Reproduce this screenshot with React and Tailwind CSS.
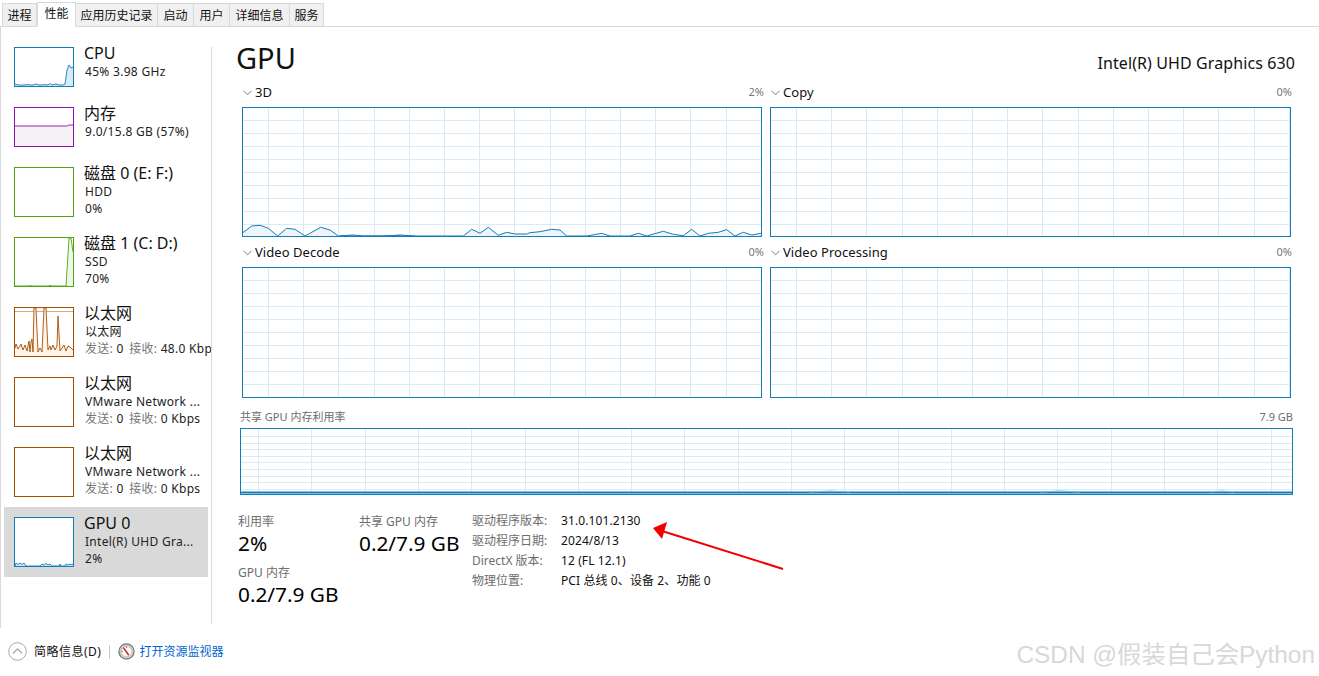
import React from "react";

const FONT = '"Noto Sans", "Noto Sans CJK SC", sans-serif';

const tabs = [
  { name: "进程", w: "w-[35px]" },
  { name: "性能", w: "w-[39px]", active: true },
  { name: "应用历史记录", w: "w-[83px]" },
  { name: "启动", w: "w-[37px]" },
  { name: "用户", w: "w-[37px]" },
  { name: "详细信息", w: "w-[61px]" },
  { name: "服务", w: "w-[35px]" },
];

/* task manager chart colours */
const BLUE = "#117dbb";
const PURPLE = "#8b12ae";
const GREEN = "#4da60c";
const BROWN = "#a74f01";

const toPath = (pts) => pts.map((p, i) => `${i ? "L" : "M"}${p[0]} ${p[1]}`).join(" ");

const Thumb = ({ color, h, line, fill, extra }) => (
  <div className={`w-[60px] shrink-0 border bg-white ${h}`} style={{ borderColor: color }}>
    <svg className="block w-full h-full" viewBox={`0 0 58 ${h === "h-[40px]" ? 38 : 48}`} preserveAspectRatio="none">
      {extra}
      {line && <path d={`${toPath(line)} L58 60 L0 60 Z`} fill={fill} stroke="none" />}
      {line && <path d={toPath(line)} fill="none" stroke={color} strokeWidth="0.9" />}
    </svg>
  </div>
);

const cpuLine = [[0,36],[3,37],[6,37],[9,37],[12,36.5],[15,37],[18,37],[21,36],[24,37],[27,37],[30,36.5],[33,37],[35,35.5],[37,37],[41,36],[44,37],[48,37],[50,36],[52,22],[54,17],[56,20],[58,19]];
const memLine = [[0,18],[52,18],[54,17],[58,17]];
const disk1Line = [[0,48],[15,48],[15.5,47],[16,48],[34,48],[35,47],[36,48],[51,48],[54,0],[56,0],[58,14]];
const ethLine = [[0,40],[1,36],[3,41],[5,38],[6,36],[8,42],[10,37],[12,43],[14,33],[15,44],[16,34],[17,31],[18,44],[19,0],[21,0],[23,44],[25,40],[27,44],[29,0],[31,0],[33,42],[35,38],[36,42],[38,37],[40,42],[42,38],[43,8],[45,43],[47,40],[49,37],[51,43],[53,38],[55,39],[58,42]];
const gpuLine = [[0,48],[1,45],[3,46.5],[5,45],[7,46.5],[9,45],[11,48],[25,48],[27,46],[29,47],[31,45.5],[33,47],[35,46],[37,48],[44,48],[45,46],[46,48],[50,48],[51,46],[53,47],[55,46],[56,47],[58,46]];

const sideItems = [
  { title: "CPU", sub: ["45% 3.98 GHz"], color: BLUE, h: "h-[40px]", line: cpuLine, fill: "#d8e9f3" },
  { title: "内存", sub: ["9.0/15.8 GB (57%)"], color: PURPLE, h: "h-[40px]", line: memLine, fill: "#f4f2f4" },
  { title: "磁盘 0 (E: F:)", sub: ["HDD", "0%"], color: GREEN, h: "h-[50px]" },
  { title: "磁盘 1 (C: D:)", sub: ["SSD", "70%"], color: GREEN, h: "h-[50px]", line: disk1Line, fill: "#eff6e9" },
  {
    title: "以太网",
    sub: ["以太网"],
    net: "48.0 Kbps",
    color: BROWN,
    h: "h-[50px]",
    line: ethLine,
    fill: "#fcf3e9",
    extra: <path d="M0 3.5 H58" stroke="#d2ad8c" strokeWidth="1" />,
  },
  { title: "以太网", sub: ["VMware Network ..."], net: "0 Kbps", color: BROWN, h: "h-[50px]" },
  { title: "以太网", sub: ["VMware Network ..."], net: "0 Kbps", color: BROWN, h: "h-[50px]" },
  { title: "GPU 0", sub: ["Intel(R) UHD Gra...", "2%"], color: BLUE, h: "h-[50px]", line: gpuLine, fill: "#d8e9f3", selected: true },
];

const SideItem = ({ item }) => (
  <div className={`ml-[4px] w-[204px] flex pl-[10px] pt-[10px] pb-[10px] whitespace-nowrap ${item.selected ? "bg-[#d9d9d9]" : ""}`}>
    <Thumb color={item.color} h={item.h} line={item.line} fill={item.fill} extra={item.extra} />
    <div className="ml-[10px] -mt-[4px]">
      <div className="h-[20px] text-[16px] leading-[20px] text-[#111]">{item.title}</div>
      {item.sub.map((s, i) => (
        <div key={i} className="h-[17px] pl-px text-[12px] leading-[17px] tracking-[0.3px] text-[#222]">{s}</div>
      ))}
      {item.net && (
        <div className="h-[17px] pl-px text-[12px] leading-[17px] tracking-[0.3px] text-[#222]">
          <span className="text-[#777]">发送:</span> 0 <span className="text-[#777] ml-[2px]">接收:</span> {item.net}
        </div>
      )}
    </div>
  </div>
);

const points3d = "242,233.3 251.7,226 260,225.3 268.3,228.3 277.7,236 286.7,228.3 295,229.3 305,236 320.7,227.3 330,230 338.3,236 353.3,235 363.3,236 386.7,236 400,235 415,236 463.3,236 471.7,229.3 480,233.3 488.3,227.3 498.3,235.3 506.7,232.3 515,234 526.7,234 530,232.7 540,231.7 551.7,229.3 560,230 566.7,236 586.7,236 601.7,233.3 610,236 630,236 638.3,233.3 646.7,236 663.3,231.3 673.3,234.3 683.3,235.7 691.7,229.3 700,236 708.3,233.3 718.3,232.3 726.7,229.7 735,236 743.3,232.3 751.7,235 761,233.3";

/* grid of a big chart: x and y are the screen lines */
const Graph = ({ x0, y0, w, h, firstX, stepX, firstY, stepY, rows, children }) => {
  const vs = [];
  for (let x = firstX; x < x0 + w - 1; x += stepX) vs.push(x);
  const hs = [];
  for (let i = 0; i < rows; i++) hs.push(firstY + i * stepY);
  return (
    <div className="border border-[#117dbb] bg-white" style={{ width: w, height: h }}>
      <svg className="block" width={w - 2} height={h - 2} viewBox={`${x0 + 1} ${y0 + 1} ${w - 2} ${h - 2}`}>
        {hs.map((y) => (
          <line key={y} x1={x0} x2={x0 + w} y1={Math.round(y) + 0.5} y2={Math.round(y) + 0.5} stroke="#d9eaf5" />
        ))}
        {vs.map((x) => (
          <line key={x} x1={Math.round(x) + 0.5} x2={Math.round(x) + 0.5} y1={y0} y2={y0 + h} stroke="#d9eaf5" />
        ))}
        {children}
      </svg>
    </div>
  );
};

const Chevron = () => (
  <svg width="9" height="6" viewBox="0 0 9 6" className="shrink-0">
    <path d="M0.5 0.8 L4.5 4.8 L8.5 0.8" fill="none" stroke="#7d7d7d" strokeWidth="1" />
  </svg>
);

const EngineCell = ({ name, pct, x0, y0, h, children }) => (
  <div className="w-[521px]">
    <div className="h-[30px] pt-[2px] flex items-center">
      <div className="ml-[1px] mr-[3px] w-[9px] flex"><Chevron /></div>
      <span className="text-[13px] tracking-[0.05px] text-[#111]">{name}</span>
      <span className="ml-auto -mr-[1px] -mt-[2px] text-[11px] text-[#777]">{pct}</span>
    </div>
    <Graph x0={x0} y0={y0} w={x0 === 242 ? 520 : 521} h={h} firstX={x0 === 242 ? 268 : 796} stepX={35.2} firstY={y0 + 13} stepY={13} rows={9}>
      {children}
    </Graph>
  </div>
);

const DriverRow = ({ label, value }) => (
  <div className="h-[20px] flex items-center whitespace-nowrap text-[12px]">
    <span className="w-[89px] text-[#6d6d6d]">{label}</span>
    <span className="tracking-[0.1px] text-[#111]">{value}</span>
  </div>
);

const Stat = ({ label, value, className = "" }) => (
  <div className={`whitespace-nowrap ${className}`}>
    <div className="h-[16px] text-[12px] leading-[18px] text-[#6d6d6d]">{label}</div>
    <div className="h-[30px] text-[20.8px] leading-[28px] text-black">{value}</div>
  </div>
);

const MonitorIcon = () => (
  <svg width="17" height="17" viewBox="0 0 17 17" className="shrink-0">
    <circle cx="8.5" cy="8.5" r="7.6" fill="#d8d6d0" stroke="#77756f" strokeWidth="1.2" />
    <circle cx="8.5" cy="8.5" r="5.4" fill="#fbfbf8" stroke="#a8a6a0" strokeWidth="0.7" />
    <path d="M5.4 4.6 L10.8 12.2" stroke="#c8242c" strokeWidth="1.5" />
    <path d="M3.5 8.5 H5 M8.5 3.5 V5" stroke="#555" strokeWidth="0.7" />
  </svg>
);

export default function App() {
  return (
    <div className="relative w-[1319px] h-[676px] overflow-hidden bg-white flex flex-col" style={{ fontFamily: FONT }}>
      {/* tabs */}
      <div className="h-[27px] flex items-end pl-[2px] border-b border-[#d9d9d9]">
        {tabs.map((t) => (
          <div
            key={t.name}
            className={`${t.w} flex items-center justify-center text-[12px] text-[#111] border border-[#d9d9d9] whitespace-nowrap ${
              t.active ? "h-[25px] bg-white border-b-white -mb-[1px] pb-[2px]" : "h-[23px] pt-[1px] bg-[#f0f0f0] -ml-px first:ml-0 border-b-0"
            }`}
          >
            {t.name}
          </div>
        ))}
      </div>

      <div className="flex-1 flex min-h-0">
        {/* left list */}
        <div className="w-[212px] shrink-0 relative border-l border-[#d9d9d9] overflow-hidden pt-[10px]">
          {sideItems.map((item, i) => (
            <div key={i} className="-ml-px">
              <SideItem item={item} />
            </div>
          ))}
          <div className="absolute right-0 top-[20px] h-[577px] w-px bg-[#d9d9d9]" />
        </div>

        {/* GPU panel */}
        <div className="flex-1 pl-[24px] pr-[24px]">
          <div className="h-[50px] flex items-center justify-between pt-[10px]">
            <span className="text-[29px] leading-none text-[#111]">GPU</span>
            <span className="mt-[12px] text-[16px] tracking-[0.1px] text-[#111]">Intel(R) UHD Graphics 630</span>
          </div>

          <div className="ml-[6px] w-[1049px] flex flex-wrap gap-x-[7px]">
            <EngineCell name="3D" pct="2%" x0={242} y0={107} h={130}>
              <polygon points={`242,236 ${points3d} 761,236`} fill="#eef5fa" />
              <polyline points={points3d} fill="none" stroke={BLUE} strokeWidth="1" />
              <path d="M340 236 H400 M385 236 H415" stroke={BLUE} strokeWidth="1" />
            </EngineCell>
            <EngineCell name="Copy" pct="0%" x0={770} y0={107} h={130} />
            <EngineCell name="Video Decode" pct="0%" x0={242} y0={267} h={131} />
            <EngineCell name="Video Processing" pct="0%" x0={770} y0={267} h={131} />
          </div>

          <div className="ml-[4px] w-[1053px]">
            <div className="h-[30px] pt-[8px] flex items-center justify-between text-[11px] text-[#6d6d6d]">
              <span>共享 GPU 内存利用率</span>
              <span>7.9 GB</span>
            </div>
            <Graph x0={240} y0={428} w={1053} h={67} firstX={258} stepX={53.3} firstY={436} stepY={6.6} rows={9}>
              <path d="M240 492.5 H1293" stroke={BLUE} strokeWidth="2" />
              <path d="M810 492 L830 491 L850 492 M1040 492 L1060 491 L1080 492 M1210 492 L1222 491 L1234 492" fill="none" stroke="#7fb8da" strokeWidth="1" />
            </Graph>
          </div>

          <div className="flex pt-[18px] ml-[2px]">
            <div className="w-[121px]">
              <Stat label="利用率" value="2%" />
              <Stat label="GPU 内存" value="0.2/7.9 GB" className="mt-[5px]" />
            </div>
            <Stat label="共享 GPU 内存" value="0.2/7.9 GB" className="w-[113px]" />
            <div className="-mt-[2px]">
              <DriverRow label="驱动程序版本:" value="31.0.101.2130" />
              <DriverRow label="驱动程序日期:" value="2024/8/13" />
              <DriverRow label="DirectX 版本:" value="12 (FL 12.1)" />
              <DriverRow label="物理位置:" value="PCI 总线 0、设备 2、功能 0" />
            </div>
          </div>
        </div>
      </div>

      {/* footer */}
      <div className="h-[48px] shrink-0 flex items-center pl-[8px] pb-[1px]">
        <svg width="19" height="19" viewBox="0 0 19 19" className="shrink-0">
          <circle cx="9.5" cy="9.5" r="8.8" fill="none" stroke="#a8a8a8" strokeWidth="1" />
          <path d="M4.8 11.5 L9.5 6.8 L14.2 11.5" fill="none" stroke="#a8a8a8" strokeWidth="1.2" />
        </svg>
        <span className="ml-[7px] text-[12px] tracking-[0.5px] text-[#111]">简略信息(D)</span>
        <div className="ml-[8px] w-px h-[14px] bg-[#c8c8c8]" />
        <div className="ml-[8px] flex"><MonitorIcon /></div>
        <span className="ml-[4px] text-[12px] text-[#0066cc]">打开资源监视器</span>
      </div>

      {/* red arrow drawn over the screenshot */}
      <svg className="absolute left-0 top-0 pointer-events-none" width="1319" height="676">
        <path d="M783 569 L662 531" stroke="#f00000" strokeWidth="2" />
        <polygon points="653,528 667,522 662,539" fill="#f00000" />
      </svg>

      {/* watermark */}
      <div
        className="absolute right-[4px] top-[638px] text-[24.4px] leading-[34px] text-[#d8d8d8] whitespace-nowrap"
        style={{ fontFamily: '"Liberation Sans", "Noto Sans CJK SC", sans-serif' }}
      >
        CSDN @假装自己会Python
      </div>
    </div>
  );
}
